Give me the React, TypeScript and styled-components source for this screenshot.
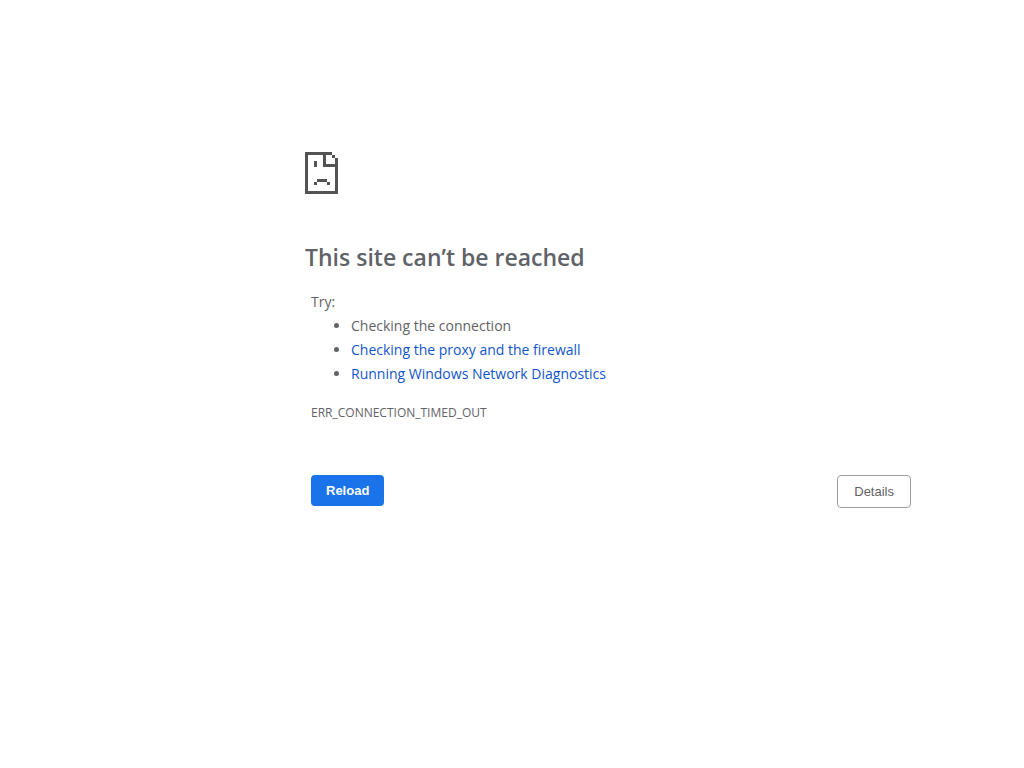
import React from "react";
import styled, { createGlobalStyle } from "styled-components";

const GlobalStyle = createGlobalStyle`
  body {
    margin: 0;
    background: #fff;
    color: #5f6368;
    font-family: "Segoe UI", "Open Sans", sans-serif;
    font-size: 14px;
    line-height: 24px;
  }
`;

const Page = styled.main`
  box-sizing: border-box;
  max-width: 911px;
  padding: 152px 0 48px 305px;
`;

const SadPage = styled.svg`
  display: block;
  width: 33px;
  height: 42px;
  fill: #535353;
`;

const Title = styled.h1`
  margin: 46px 0 16px;
  font-size: 23px;
  line-height: 34px;
  font-weight: 600;
`;

const Content = styled.div`
  padding-left: 6px;
`;

const Text = styled.p`
  margin: 0;
`;

const Suggestions = styled.ul`
  margin: 0;
  padding-left: 40px;
`;

const Link = styled.a`
  color: #1155cc;
  text-decoration: none;
`;

const ErrorCode = styled.p`
  margin: 15px 0 0;
  font-size: 12px;
`;

const Actions = styled.div`
  display: flex;
  justify-content: space-between;
  align-items: flex-start;
  margin-top: 50px;
`;

const Button = styled.button<{ $primary?: boolean }>`
  padding: 8px ${(p) => (p.$primary ? 15 : 16)}px;
  border: ${(p) => (p.$primary ? "0" : "1px solid #9aa0a6")};
  border-radius: 4px;
  background: ${(p) => (p.$primary ? "#1a73e8" : "#fff")};
  color: ${(p) => (p.$primary ? "#fff" : "#5f6368")};
  font: ${(p) => (p.$primary ? 700 : 400)} 13px/15px "Liberation Sans", Arial, sans-serif;
  cursor: pointer;
`;

export default function App() {
  return (
    <>
      <GlobalStyle />
      <Page>
        <SadPage viewBox="0 0 33 42" shapeRendering="crispEdges" aria-hidden="true">
          <path d="M0 0H27V3H21V12H33V42H0ZM3 3V39H30V15H18V3Z" fillRule="evenodd" />
          <path d="M27 3h3v3h-3zM30 6h3v6h-3zM9 9h3v6H9zM12 27h10v3H12zM9 30h3v3H9zM22 30h3v3h-3z" />
        </SadPage>
        <Title>This site can’t be reached</Title>
        <Content>
          <Text>Try:</Text>
          <Suggestions>
            <li>Checking the connection</li>
            <li><Link href="#proxy">Checking the proxy and the firewall</Link></li>
            <li><Link href="#diagnostics">Running Windows Network Diagnostics</Link></li>
          </Suggestions>
          <ErrorCode>ERR_CONNECTION_TIMED_OUT</ErrorCode>
          <Actions>
            <Button type="button" $primary>Reload</Button>
            <Button type="button">Details</Button>
          </Actions>
        </Content>
      </Page>
    </>
  );
}
